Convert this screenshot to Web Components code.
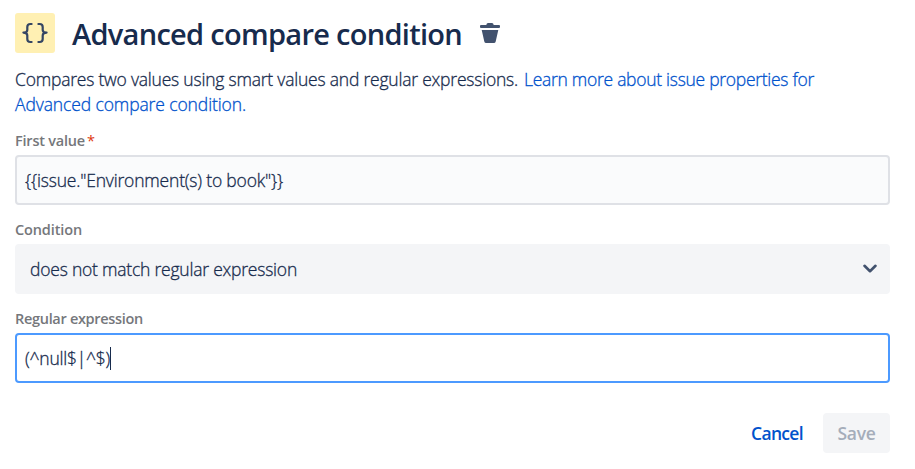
<!DOCTYPE html>
<html lang="en">
<head>
<meta charset="utf-8">
<title>Advanced compare condition</title>
<style>
body{margin:0;background:#fff;font-family:"Open Sans","Noto Sans",sans-serif;font-weight:300;color:#172b4d}
</style>
</head>
<body>
<condition-editor></condition-editor>
<script>
function define(name, html, setup) {
  const template = document.createElement('template');
  template.innerHTML = html;
  customElements.define(name, class extends HTMLElement {
    constructor() {
      super();
      this.attachShadow({mode: 'open'}).append(template.content.cloneNode(true));
    }
    connectedCallback() { if (setup) setup(this, this.shadowRoot); }
  });
}

/* A single line of text, tracked so that it takes up the given width. */
define('fit-text', `<style>:host{display:inline-block;white-space:pre;flex:none}span{display:inline-block}</style><span><slot></slot></span>`,
  (host, root) => {
    const span = root.querySelector('span');
    const width = Number(host.getAttribute('width'));
    const count = host.textContent.length;
    span.style.letterSpacing = (width - span.getBoundingClientRect().width) / count + 'px';
    host.style.width = width + 'px';
  });

define('smart-icon', `<style>:host{display:flex;width:40px;height:40px;border-radius:3px;background:#fff0b3}svg{display:block}</style>
<svg width="40" height="40" viewBox="0 0 40 40" fill="none" stroke="#344563" stroke-width="2.2" stroke-linecap="round" stroke-linejoin="round"><path d="M16.6 11H15.3Q12.3 11 12.3 14V17Q12.3 19.6 8.4 19.6Q12.3 19.6 12.3 22.5V26Q12.3 29 15.3 29H16.6M23.4 11H24.7Q27.7 11 27.7 14V17Q27.7 19.6 31.6 19.6Q27.7 19.6 27.7 22.5V26Q27.7 29 24.7 29H23.4"/></svg>`);

define('trash-icon', `<style>:host{display:block}svg{display:block}</style>
<svg width="20" height="21" viewBox="0 0 20 21" fill="#42526e"><path d="M1 2H6.3Q6.6 0 8 0H12Q13.4 0 13.7 2H19Q20 2 20 3V4Q20 5 19 5H1Q0 5 0 4V3Q0 2 1 2ZM1.7 7H18.3L15.7 18.4Q15.4 20 13.8 20H6.2Q4.6 20 4.3 18.4Z"/></svg>`);

define('editor-header', `<style>:host{display:flex;height:40px;align-items:center}
h1{margin:1px 0 0 17px;font-size:29px;line-height:40px;font-weight:600;height:40px}
trash-icon{margin:0 0 0 18px}</style>
<smart-icon></smart-icon><h1><fit-text width="390">Advanced compare condition</fit-text></h1><trash-icon></trash-icon>`);

define('editor-description', `<style>:host{display:block;margin-top:14px;font-size:17.5px;line-height:25px;-webkit-text-stroke:.3px currentColor}
div{display:flex;height:25px}a{color:#0052cc;text-decoration:none}.gap{margin-left:6px}</style>
<div><fit-text width="503">Compares two values using smart values and regular expressions.</fit-text><a class="gap"><fit-text width="290">Learn more about issue properties for</fit-text></a></div>
<div><a><fit-text width="231">Advanced compare condition.</fit-text></a></div>`);

define('form-field', `<style>:host{display:block}
.label{display:flex;height:20px;align-items:center;font-size:14.5px;line-height:20px;font-weight:600;color:#75777b;margin-bottom:4px}
.star{color:#de350b;margin-left:2px;font-weight:400}
.box{box-sizing:border-box;display:flex;align-items:center;height:50px;border:2px solid #dfe1e6;border-radius:4px;background:#fafbfc;padding:0 8px;font-size:17.5px;line-height:25px;color:#172b4d;-webkit-text-stroke:.3px currentColor}
:host([kind=select]) .box{border-color:#f4f5f7;background:#f4f5f7;padding:0 10px 0 13px}
:host([kind=focus]) .box{border-color:#4c9aff;background:#fff}
svg{margin-left:auto}.caret{width:1px;height:23px;background:#172b4d}
[hidden]{display:none}</style>
<div class="label"><slot name="label"></slot><span class="star" hidden>*</span></div>
<div class="box"><slot></slot><span class="caret" hidden></span><svg hidden width="16" height="10" viewBox="0 0 16 10" fill="none" stroke="#42526e" stroke-width="2.6" stroke-linecap="round" stroke-linejoin="round"><path d="M2.5 1.8L8 7.2L13.5 1.8"/></svg></div>`,
  (host, root) => {
    const kind = host.getAttribute('kind');
    root.querySelector('.star').hidden = !host.hasAttribute('required');
    root.querySelector('.caret').hidden = kind !== 'focus';
    if (kind === 'select') root.querySelector('svg').removeAttribute('hidden');
  });

define('action-button', `<style>:host{display:flex;align-items:center;justify-content:center;box-sizing:border-box;height:40px;border-radius:4px;font-size:17.5px;line-height:25px;font-weight:600;color:#0052cc}
:host([disabled]){width:67px;background:#f4f5f7;color:#a5adba}</style><slot></slot>`);

define('condition-editor', `<style>:host{display:block;padding:13px 25px 0 15px}
.fields{display:grid;row-gap:15px;margin-top:14px}
.actions{display:flex;justify-content:flex-end;gap:20px;margin-top:30px}</style>
<editor-header></editor-header>
<editor-description></editor-description>
<div class="fields">
<form-field required><fit-text slot="label" width="70">First value</fit-text><fit-text width="258">{{issue."Environment(s) to book"}}</fit-text></form-field>
<form-field kind="select"><fit-text slot="label" width="67">Condition</fit-text><fit-text width="267">does not match regular expression</fit-text></form-field>
<form-field kind="focus"><fit-text slot="label" width="128">Regular expression</fit-text><fit-text width="85">(^null$|^$)</fit-text></form-field>
</div>
<div class="actions"><action-button><fit-text width="52">Cancel</fit-text></action-button><action-button disabled><fit-text width="38">Save</fit-text></action-button></div>`);
</script>
</body>
</html>
